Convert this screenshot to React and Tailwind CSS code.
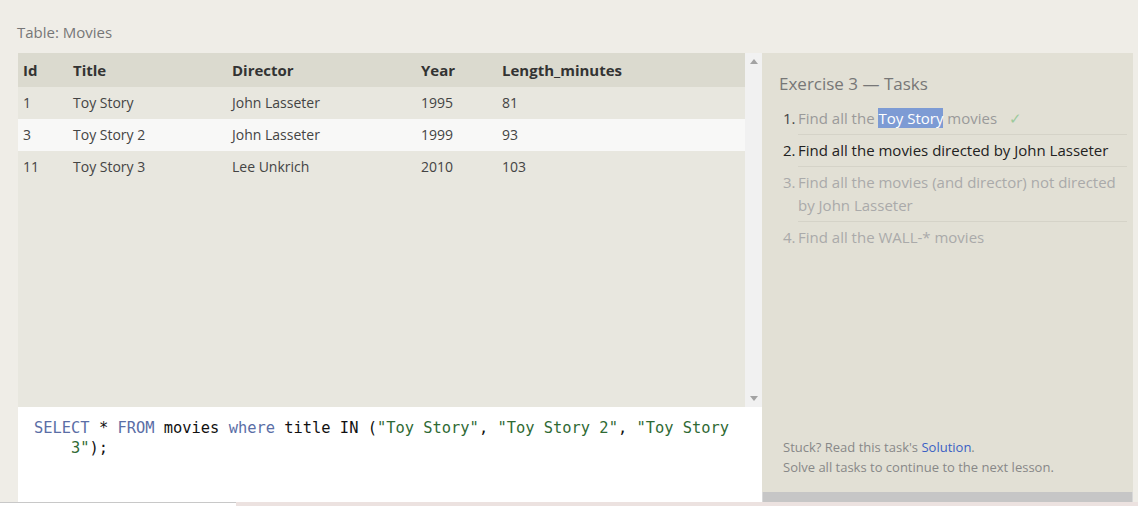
import React from 'react';

const rows = [
  { id: '1', title: 'Toy Story', director: 'John Lasseter', year: '1995', len: '81' },
  { id: '3', title: 'Toy Story 2', director: 'John Lasseter', year: '1999', len: '93', hl: true },
  { id: '11', title: 'Toy Story 3', director: 'Lee Unkrich', year: '2010', len: '103' },
];

const cols = 'grid grid-cols-[50px_159px_189px_81px_1fr] pl-[5px]';

function Scrollbar() {
  return (
    <div className="w-[17px] bg-[#f1f1f1] flex flex-col justify-between items-center py-[6px]">
      <svg width="8" height="5" viewBox="0 0 8 5">
        <path d="M0 5 L4 0 L8 5 Z" fill="#a3a3a3" />
      </svg>
      <svg width="8" height="5" viewBox="0 0 8 5">
        <path d="M0 0 L4 5 L8 0 Z" fill="#a3a3a3" />
      </svg>
    </div>
  );
}

function MoviesTable() {
  return (
    <div className="flex h-[354px]">
      <div className="flex-1 bg-[#e8e7df] text-[14px] text-[#444]">
        <div className={`${cols} h-[34px] items-center bg-[#dbdacf] text-[15px] font-bold text-[#333]`}>
          <span>Id</span>
          <span>Title</span>
          <span>Director</span>
          <span>Year</span>
          <span>Length_minutes</span>
        </div>
        {rows.map((r) => (
          <div
            key={r.id}
            className={`${cols} h-[32px] pb-[1px] items-center ${r.hl ? 'bg-[#f8f8f7]' : ''}`}
          >
            <span>{r.id}</span>
            <span>{r.title}</span>
            <span>{r.director}</span>
            <span>{r.year}</span>
            <span>{r.len}</span>
          </div>
        ))}
      </div>
      <Scrollbar />
    </div>
  );
}

function CodeEditor() {
  const kw = 'text-[#5a6ea6]';
  const str = 'text-[#2f6a34]';
  return (
    <div className="h-[95px] bg-white pl-[16px] pt-[11px] font-['DejaVu_Sans_Mono',monospace] text-[15.4px] leading-[20px] text-[#111] whitespace-pre">
      <div>
        <span className={kw}>SELECT</span> * <span className={kw}>FROM</span> movies{' '}
        <span className={kw}>where</span> title IN (<span className={str}>"Toy Story"</span>,{' '}
        <span className={str}>"Toy Story 2"</span>, <span className={str}>"Toy Story</span>
      </div>
      <div className="pl-[37px]">
        <span className={str}>3"</span>);
      </div>
    </div>
  );
}

function TaskItem({ n, children, tone, last }) {
  return (
    <li className="flex pl-[21px]">
      <span className={`w-[15px] shrink-0 ${tone === 'done' ? 'text-[#444]' : tone === 'active' ? 'text-[#222]' : 'text-[#aaa]'}`}>
        {n}.
      </span>
      <div
        className={`flex-1 mr-[6px] pb-[4px] mb-[4px] ${last ? '' : 'border-b border-[#d5d3c8]'} ${
          tone === 'done' ? 'text-[#9a9a9a]' : tone === 'active' ? 'text-[#222]' : 'text-[#aaa]'
        }`}
      >
        {children}
      </div>
    </li>
  );
}

function TasksPanel() {
  return (
    <div className="w-[371px] flex flex-col">
      <div className="h-[439px] bg-[#e2e0d5] flex flex-col pt-[21px]">
        <h2 className="pl-[17px] text-[17px] text-[#777] font-normal leading-[20px]">Exercise 3 — Tasks</h2>
        <ol className="mt-[13px] text-[15px] leading-[23px]">
          <TaskItem n={1} tone="done">
            Find all the <span className="bg-[#7d9bd4] text-white">Toy Story</span> movies
            <span className="ml-[12px] text-[#9cca9c]">✓</span>
          </TaskItem>
          <TaskItem n={2} tone="active">
            Find all the movies directed by John Lasseter
          </TaskItem>
          <TaskItem n={3}>
            Find all the movies (and director) not directed by John Lasseter
          </TaskItem>
          <TaskItem n={4} last>
            Find all the WALL-* movies
          </TaskItem>
        </ol>
        <div className="mt-auto pl-[21px] pb-[15px] text-[13px] leading-[20px] text-[#888]">
          <p>
            Stuck? Read this task's <span className="text-[#3a5fc4]">Solution</span>.
          </p>
          <p>Solve all tasks to continue to the next lesson.</p>
        </div>
      </div>
      <div className="h-[10px] bg-[#c6c6c6] border-x border-[#d8d8d8]" />
    </div>
  );
}

export default function App() {
  return (
    <div className="w-[1138px] h-[506px] overflow-hidden bg-[#efede7] flex flex-col font-['Open_Sans',sans-serif]">
      <div className="h-[53px] pl-[17px] pt-[22px] text-[15px] leading-[20px] text-[#777]">Table: Movies</div>
      <div className="flex pl-[18px]">
        <div className="w-[744px] flex flex-col">
          <MoviesTable />
          <CodeEditor />
        </div>
        <TasksPanel />
      </div>
      <div className="flex h-[4px]">
        <div className="w-[236px] bg-white border-t border-[#c8c8c8]" />
        <div className="flex-1 bg-[#ece2e0]" />
      </div>
    </div>
  );
}
